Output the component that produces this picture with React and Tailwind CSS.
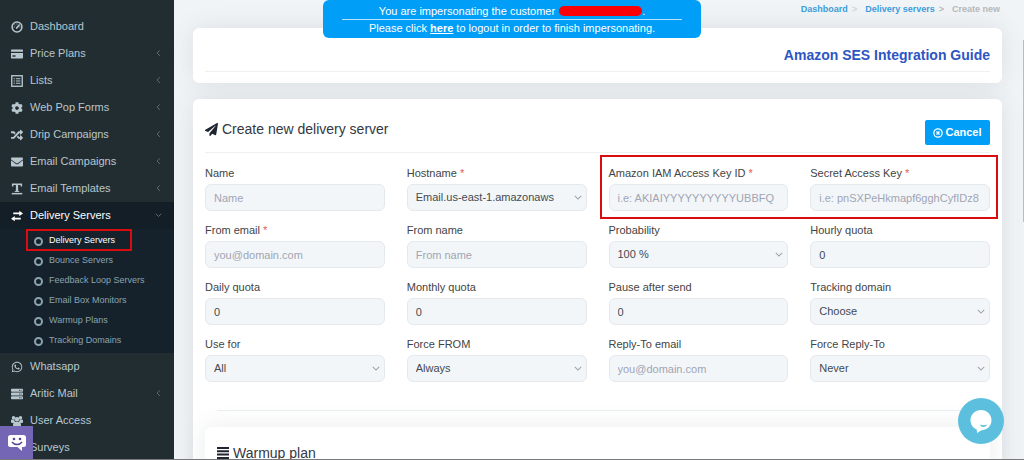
import React from 'react';
import { FaCog, FaRandom, FaEnvelope, FaWhatsapp, FaServer, FaPaperPlane } from 'react-icons/fa';

const DashboardIcon = () => (
  <svg viewBox="0 0 16 16" className="w-3 h-3 shrink-0" fill="none" stroke="currentColor">
    <circle cx="8" cy="8" r="6.6" strokeWidth="2" />
    <path d="M7.6 9.4l3.4-4" strokeWidth="2.2" strokeLinecap="round" />
    <path d="M3.6 8h1.4M5 4.8l.9.9M8 3.4v1.2M11.2 8h1.4" strokeWidth="1.2" />
  </svg>
);

const CardIcon = () => (
  <svg viewBox="0 0 16 16" className="w-3 h-3 shrink-0" fill="currentColor">
    <path d="M1 2h14a1 1 0 011 1v2H0V3a1 1 0 011-1z" />
    <path fillRule="evenodd" d="M0 6.6h16V13a1 1 0 01-1 1H1a1 1 0 01-1-1zM2 9.5v2h4v-2z" />
  </svg>
);

const ListIcon = () => (
  <svg viewBox="0 0 16 16" className="w-3 h-3 shrink-0" fill="none" stroke="currentColor">
    <rect x="1" y="1" width="14" height="14" strokeWidth="1.8" />
    <path d="M3.5 5h1.6M3.5 8h1.6M3.5 11h1.6M6.5 5h6M6.5 8h6M6.5 11h6" strokeWidth="1.6" />
  </svg>
);

const TextIcon = () => (
  <svg viewBox="0 0 16 16" className="w-3 h-3 shrink-0" fill="none" stroke="currentColor">
    <path d="M2.2 4.5V1.5h11.6v3" strokeWidth="2" />
    <path d="M8 1.5v10" strokeWidth="3" />
    <path d="M5 11.2h6" strokeWidth="1.4" />
    <path d="M1 14.2h14" strokeWidth="2" />
  </svg>
);

const TransferIcon = () => (
  <svg viewBox="0 0 16 14" className="w-3 h-3 shrink-0" fill="currentColor">
    <path d="M11 0l5 3.500-5 3.500V4.600H3V2.400h8z" />
    <path d="M5 7L0 10.500 5 14v-2.400h8V9.400H5z" />
  </svg>
);

const UsersIcon = () => (
  <svg viewBox="0 0 18 16" className="w-3 h-3 shrink-0" fill="currentColor">
    <circle cx="3.8" cy="3" r="2.6" />
    <circle cx="14.2" cy="3" r="2.6" />
    <circle cx="9" cy="5.5" r="3.4" />
    <path d="M0 10V7.500C0 6.300 1 5.800 2 5.800h2.600L6 9.500 4 11H1zM18 10V7.500c0-1.200-1-1.700-2-1.700h-2.600L12 9.500l2 1.500h3z" />
    <path d="M3 14.500c0-3 1-5.500 3.500-5.500h5c2.500 0 3.500 2.500 3.500 5.500 0 1-.8 1.500-1.800 1.500H4.800C3.800 16 3 15.500 3 14.500z" />
  </svg>
);

const Chevron = ({ className }) => (
  <svg viewBox="0 0 10 6" className={className} fill="none" stroke="currentColor" strokeWidth="1.3">
    <path d="M1 1l4 4 4-4" />
  </svg>
);

const topItems = [
  { label: 'Dashboard', icon: DashboardIcon },
  { label: 'Price Plans', icon: CardIcon, arrow: true },
  { label: 'Lists', icon: ListIcon, arrow: true },
  { label: 'Web Pop Forms', icon: FaCog, arrow: true },
  { label: 'Drip Campaigns', icon: FaRandom, arrow: true },
  { label: 'Email Campaigns', icon: FaEnvelope, arrow: true },
  { label: 'Email Templates', icon: TextIcon, arrow: true },
];

const serverItems = [
  'Delivery Servers',
  'Bounce Servers',
  'Feedback Loop Servers',
  'Email Box Monitors',
  'Warmup Plans',
  'Tracking Domains',
];

const bottomItems = [
  { label: 'Whatsapp', icon: FaWhatsapp },
  { label: 'Aritic Mail', icon: FaServer, arrow: true },
  { label: 'User Access', icon: UsersIcon },
  { label: 'Surveys', icon: ListIcon },
];

const fields = [
  { id: 'name', label: 'Name', placeholder: 'Name' },
  { id: 'hostname', label: 'Hostname', required: true, options: ['Email.us-east-1.amazonaws'] },
  { id: 'access-key', label: 'Amazon IAM Access Key ID', required: true, placeholder: 'i.e: AKIAIYYYYYYYYYYUBBFQ' },
  { id: 'secret-key', label: 'Secret Access Key', required: true, placeholder: 'i.e: pnSXPeHkmapf6gghCyfIDz8' },
  { id: 'from-email', label: 'From email', required: true, placeholder: 'you@domain.com' },
  { id: 'from-name', label: 'From name', placeholder: 'From name' },
  { id: 'probability', label: 'Probability', options: ['100 %'] },
  { id: 'hourly', label: 'Hourly quota', value: '0' },
  { id: 'daily', label: 'Daily quota', value: '0' },
  { id: 'monthly', label: 'Monthly quota', value: '0' },
  { id: 'pause', label: 'Pause after send', value: '0' },
  { id: 'tracking', label: 'Tracking domain', options: ['Choose'] },
  { id: 'use-for', label: 'Use for', options: ['All'] },
  { id: 'force-from', label: 'Force FROM', options: ['Always'] },
  { id: 'reply-to', label: 'Reply-To email', placeholder: 'you@domain.com' },
  { id: 'force-reply', label: 'Force Reply-To', options: ['Never'] },
];

function NavItem({ item }) {
  const Icon = item.icon;
  return (
    <li>
      <a href="#" className="flex items-center h-[27px] pl-[11px] pr-3 text-[#b8c7ce]">
        <Icon className="w-3 h-3 shrink-0" />
        <span className="ml-[7px] flex-1 whitespace-nowrap">{item.label}</span>
        {item.arrow && <Chevron className="w-[7px] rotate-90 text-[#64737b]" />}
      </a>
    </li>
  );
}

function Sidebar() {
  return (
    <nav className="w-[174px] shrink-0 bg-[#222d32] pt-[13px] text-[11px] overflow-hidden">
      <ul>
        {topItems.map((item) => <NavItem key={item.label} item={item} />)}
        <li className="bg-[#16222b]">
          <a href="#" className="flex items-center h-[27px] pl-[11px] pr-3 bg-[#141e26] text-white">
            <TransferIcon />
            <span className="ml-[7px] flex-1">Delivery Servers</span>
            <Chevron className="w-[7px] text-[#64737b]" />
          </a>
          <ul className="py-[2px] text-[9px]">
            {serverItems.map((label, idx) => (
              <li key={label} className="relative">
                <a href="#" className={idx === 0 ? 'flex items-center h-5 pl-[34px] text-white' : 'flex items-center h-5 pl-[34px] text-[#8aa4af]'}>
                  <span className="w-[9px] h-[9px] rounded-full border-2 border-[#8aa4af] mr-[6px]" />
                  {label}
                </a>
                {idx === 0 && <span className="absolute left-[26px] -top-[2px] w-[106px] h-[22px] border-2 border-[#d90d10]" />}
              </li>
            ))}
          </ul>
        </li>
        {bottomItems.map((item) => <NavItem key={item.label} item={item} />)}
      </ul>
    </nav>
  );
}

function Field({ field }) {
  const box = 'w-full h-[27px] rounded-md border border-[#e4e9ee] bg-[#f3f6f9] text-[11px]';
  return (
    <div className="min-w-0">
      <label htmlFor={field.id} className="block h-4 leading-4 mb-[3px] text-[11px] text-[#444] whitespace-nowrap">
        {field.label}
        {field.required && <span className="text-[#e05a5a]"> *</span>}
      </label>
      {field.options ? (
        <div className="relative">
          <select id={field.id} className={`${box} appearance-none pl-2 pr-5 text-[#444a50]`}>
            {field.options.map((option) => <option key={option}>{option}</option>)}
          </select>
          <Chevron className="absolute right-[5px] top-[11px] w-2 text-[#9aa3ab] pointer-events-none" />
        </div>
      ) : (
        <input id={field.id} type="text" placeholder={field.placeholder} defaultValue={field.value} className={`${box} pl-2 pr-1 text-[#444a50] placeholder:text-[#a0a5b4]`} />
      )}
    </div>
  );
}

export default function App() {
  return (
    <div className="relative flex h-screen overflow-hidden border-b border-[#77797c] bg-[#f1f4f7] font-['Liberation_Sans',Arial,sans-serif]">
      <Sidebar />

      <main className="flex-1 min-w-0 pl-[19px] pr-[22px]">
        {/* Breadcrumb */}
        <div className="flex justify-end items-center h-[28px] pb-2 pr-[2px] text-[9px] font-bold text-[#b4b8bc]">
          <a href="#" className="text-[#3c9ddb]">Dashboard</a>
          <span className="ml-1 mr-2 text-[#d0d4d8]">&gt;</span>
          <a href="#" className="text-[#3c9ddb]">Delivery servers</a>
          <span className="ml-1 mr-2">&gt;</span>
          <span>Create new</span>
        </div>

        <section className="h-[55px] rounded-md bg-white px-3 shadow-[0_0_24px_rgba(60,70,80,0.12)]">
          <div className="flex justify-end items-center h-[44px] pt-[10px] border-b border-[#eef0f2]">
            <a href="#" className="text-sm font-bold text-[#2d55c4]">Amazon SES Integration Guide</a>
          </div>
        </section>

        <section className="mt-4 rounded-md bg-white px-3 pb-5 shadow-[0_0_24px_rgba(60,70,80,0.12)]">
          <div className="flex justify-between h-[54px] border-b border-[#eef0f2]">
            <h1 className="flex items-center gap-1 h-[60px] text-sm text-[#333842]">
              <FaPaperPlane className="w-[13px] h-[13px] text-[#1e2530]" />
              Create new delivery server
            </h1>
            <button type="button" className="flex items-center justify-center gap-[2px] mt-[21px] w-[65px] h-[25px] rounded-xs bg-[#009ef7] text-[11px] font-bold text-white">
              <svg viewBox="0 0 12 12" className="w-[10px] h-[10px]" fill="none" stroke="currentColor">
                <circle cx="6" cy="6" r="5" strokeWidth="1.5" />
                <path d="M4.2 4.2l3.6 3.6M7.8 4.2l-3.6 3.6" strokeWidth="1.7" />
              </svg>
              Cancel
            </button>
          </div>

          <form className="relative grid grid-cols-4 gap-x-[22px] gap-y-[11px] pt-3">
            {fields.map((field) => <Field key={field.id} field={field} />)}
            <span className="absolute left-1/2 top-[2px] -right-2 h-[64px] ml-[2px] border-2 border-[#d90d10] pointer-events-none" />
          </form>

          <hr className="mx-3 mt-7 border-[#eceff2]" />

          <section className="mt-4 rounded-md bg-white px-3 pt-4 h-40 shadow-[0_0_24px_rgba(60,70,80,0.10)]">
            <h2 className="flex items-center gap-1 text-sm text-[#333842]">
              <svg viewBox="0 0 12 12" className="w-3 h-3" stroke="#1e2530" strokeWidth="2">
                <path d="M0 1h12M0 4.300h12M0 7.600h12M0 10.900h12" />
              </svg>
              Warmup plan
            </h2>
          </section>
        </section>
      </main>

      {/* Impersonation notice */}
      <div className="absolute top-0 left-1/2 -translate-x-1/2 w-[378px] h-[38px] rounded-md bg-[#009ef7] text-center text-[11px] leading-4 text-white whitespace-nowrap">
        <div className="flex justify-center items-center mx-[19px] h-5 pt-[3px] border-b border-[#b5e2fd]">
          You are impersonating the customer
          <span className="ml-1 w-[83px] h-[10px] rounded-full bg-[#fb0007]" />
          .
        </div>
        Please click <a href="#" className="font-bold underline">here</a> to logout in order to finish impersonating.
      </div>

      {/* Feedback widget */}
      <button type="button" aria-label="Feedback" className="absolute left-0 bottom-0 flex items-center justify-center w-[33px] h-[33px] bg-[#7565b5]">
        <svg viewBox="0 0 20 18" className="w-5 h-[18px]">
          <path d="M3.500 1h13A2.500 2.500 0 0119 3.500v7a2.500 2.500 0 01-2.500 2.500H15v4l-4.500-4h-7A2.500 2.500 0 011 10.500v-7A2.500 2.500 0 013.500 1z" fill="#fff" />
          <circle cx="7" cy="5" r="1.300" fill="#54478f" />
          <circle cx="13" cy="5" r="1.300" fill="#54478f" />
          <path d="M5 8c2.500 3.300 7.500 3.300 10 0" fill="none" stroke="#54478f" strokeWidth="1.500" />
        </svg>
      </button>

      {/* Chat bubble */}
      <button type="button" aria-label="Chat" className="absolute right-[20px] bottom-[15px] flex items-center justify-center w-[46px] h-[46px] rounded-full bg-[#5bbfdd]">
        <svg viewBox="0 0 24 26" className="w-6 h-[26px]">
          <path d="M12 2C6 2 1.500 6.500 1.500 12.200c0 4.300 2.500 7.700 6.200 9.200l.4 3.600 4.400-2.700C18.500 22 22.500 17.800 22.500 12.300 22.500 6.500 18 2 12 2z" fill="#fff" />
          <path d="M11 16.500c2 1 5 1 7 0-.6 3-6 3.600-7 0z" fill="#5bbfdd" />
        </svg>
      </button>

      {/* Scroll thumb */}
      <span className="absolute right-0 top-10 w-px h-[182px] bg-[#b9bcc0]" />
    </div>
  );
}
